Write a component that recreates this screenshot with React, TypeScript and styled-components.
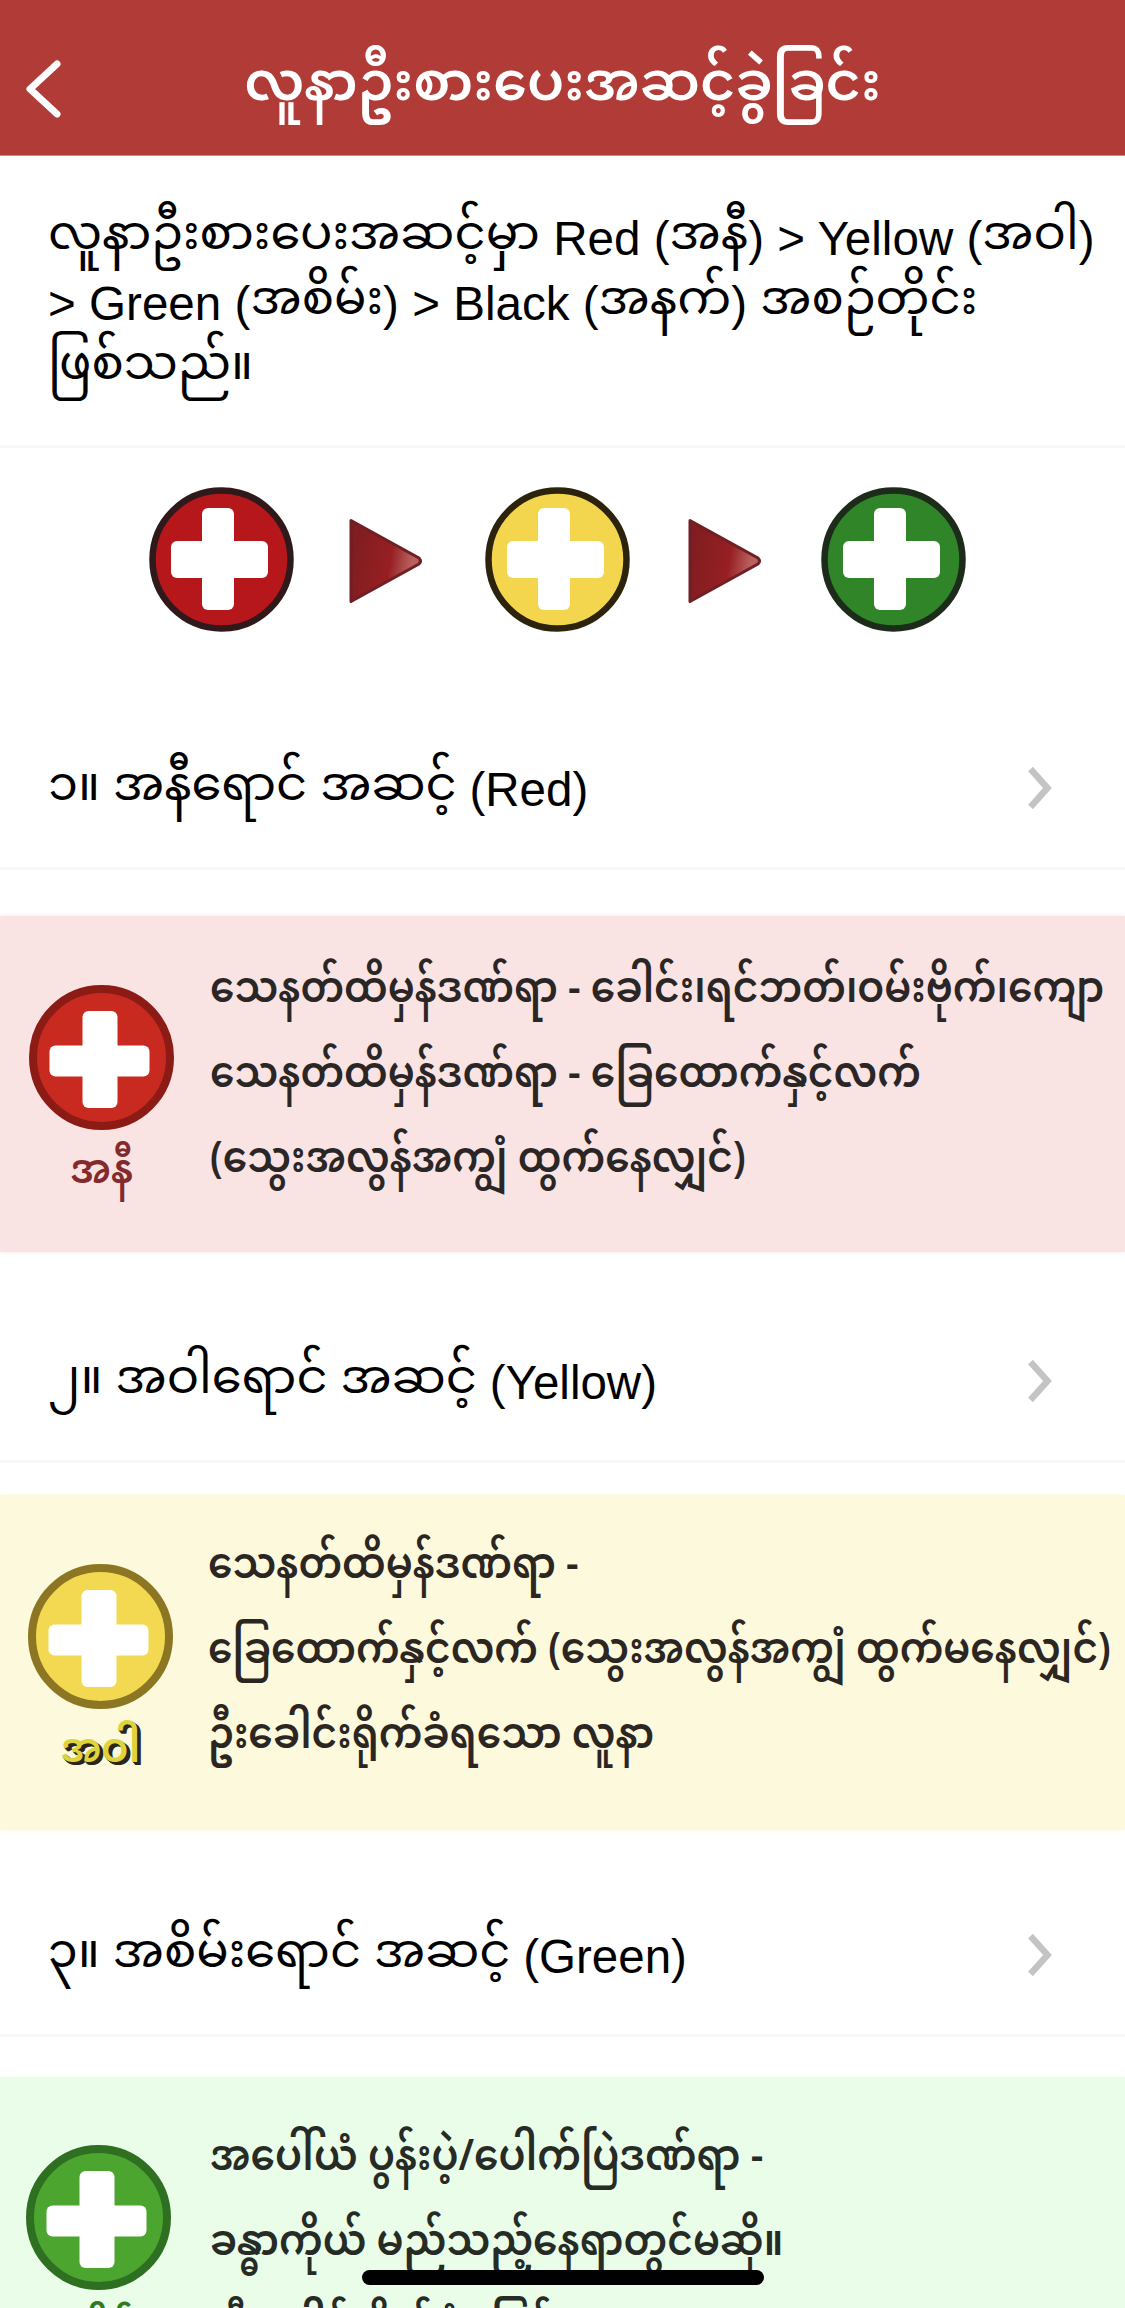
import React from "react";
import styled, { createGlobalStyle } from "styled-components";

const GlobalStyle = createGlobalStyle`
  * { box-sizing: border-box; }
  body { margin: 0; background: #fff; overflow: hidden; }
`;

const Screen = styled.main`
  position: relative;
  width: 1125px;
  height: 2308px;
  overflow: hidden;
  background: #fff;
  color: #000;
  font-family: "Liberation Sans", "Noto Sans Myanmar", sans-serif;
`;

const Header = styled.header`
  display: grid;
  grid-template-columns: 125px 1fr 125px;
  height: 156px;
  background: #b13c37;
  border-bottom: 1px solid #d08a82;
`;

const BackButton = styled.button`
  display: flex;
  padding: 60px 0 0 26px;
  border: 0;
  background: none;
`;

const Title = styled.h1`
  margin: 0;
  padding-top: 53px;
  color: #fff;
  font-family: "Noto Sans Myanmar", sans-serif;
  font-size: 53.9px;
  font-weight: 600;
  line-height: 70px;
  text-align: center;
  white-space: nowrap;
`;

const Intro = styled.section`
  height: 292px;
  padding: 50px 0 0 48px;
  border-bottom: 3px solid #f7f7f7;
`;

const IntroLine = styled.p`
  margin: 0;
  font-size: 47.6px;
  line-height: 65px;
  white-space: nowrap;
`;

const Burmese = styled.span`
  font-family: "Noto Sans Myanmar", sans-serif;
  font-size: 48px;
  line-height: 0;
  vertical-align: 6px;
`;

const Flow = styled.section`
  display: flex;
  align-items: center;
  height: 240px;
  padding: 0 0 17px 149px;
`;

const ArrowSlot = styled.div<{ $left: number; $right: number }>`
  display: flex;
  margin: 2px ${(p) => p.$right}px 0 ${(p) => p.$left}px;
`;

const LevelRow = styled.section<{ $height: number }>`
  display: flex;
  justify-content: space-between;
  align-items: flex-end;
  height: ${(p) => p.$height}px;
  padding: 0 73px 45px 48px;
  border-bottom: 3px solid #f7f7f7;
`;

const LevelTitle = styled.h2`
  margin: 0;
  font-size: 47.5px;
  font-weight: 400;
  line-height: 65px;
  word-spacing: -0.4px;
  white-space: nowrap;
`;

const ChevronSlot = styled.div`
  display: flex;
  padding-bottom: 13px;
`;

const Panel = styled.section<{ $bg: string; $gap: number; $height: number }>`
  display: flex;
  height: ${(p) => p.$height}px;
  margin-top: ${(p) => p.$gap}px;
  background: ${(p) => p.$bg};
  box-shadow: 0 0 5px ${(p) => p.$bg};
`;

const Badge = styled.div<{ $left: number; $top: number }>`
  display: flex;
  flex-direction: column;
  align-items: center;
  flex: none;
  width: 145px;
  margin-left: ${(p) => p.$left}px;
  padding-top: ${(p) => p.$top}px;
`;

const BadgeLabel = styled.span<{ $color: string; $shadow?: boolean }>`
  margin-top: 12px;
  color: ${(p) => p.$color};
  font-family: "Noto Sans Myanmar", sans-serif;
  font-size: 41px;
  font-weight: 600;
  line-height: 64px;
  white-space: nowrap;
  transform: scaleX(0.96);
  text-shadow: ${(p) => (p.$shadow ? "1px 1px 0 #2b2618, 2px 2px 0 #2b2618, 3px 3px 0 #2b2618, 4px 3px 0 #2b2618" : "none")};
`;

const Lines = styled.div<{ $color: string; $top: number; $left: number }>`
  padding: ${(p) => p.$top}px 0 0 ${(p) => p.$left}px;
  color: ${(p) => p.$color};
  font-family: "Noto Sans Myanmar", sans-serif;
  font-size: 42.5px;
  font-weight: 600;
  line-height: 85px;
  white-space: nowrap;
`;

const Line = styled.p`
  width: max-content;
  margin: 0;
  transform: scaleX(0.921);
  transform-origin: left center;
`;

const HomeBar = styled.div`
  position: absolute;
  left: 362px;
  top: 2270px;
  width: 402px;
  height: 15px;
  border-radius: 8px;
  background: #000;
`;

function MixedText({ text }: { text: string }) {
  const runs = text.split(/([\u1000-\u109f]+)/).filter(Boolean);
  return (
    <>
      {runs.map((run, i) =>
        /[\u1000-\u109f]/.test(run) ? <Burmese key={i}>{run}</Burmese> : <React.Fragment key={i}>{run}</React.Fragment>
      )}
    </>
  );
}

const CrossSvg = styled.svg`
  flex: none;
  width: 145px;
  height: 145px;
`;

function Cross({ fill, ring, thin }: { fill: string; ring: string; thin?: boolean }) {
  return (
    <CrossSvg viewBox="0 0 145 145">
      <circle cx="72.5" cy="72.5" r={thin ? 69 : 68.5} fill={fill} stroke={ring} strokeWidth={thin ? 6.5 : 8} />
      <g fill="#fff">
        <rect x={thin ? 53 : 53.5} y={thin ? 21 : 26} width={thin ? 32 : 35} height={thin ? 102 : 97} rx="6" />
        <rect x={thin ? 22 : 20.5} y={thin ? 54 : 60.5} width={thin ? 97 : 100} height={thin ? 37 : 31} rx="6" />
      </g>
    </CrossSvg>
  );
}

function Arrow() {
  return (
    <svg width="74" height="86" viewBox="0 0 74 86">
      <defs>
        <linearGradient id="arrow" x1="0" x2="1" y1="0.2" y2="0.4">
          <stop offset="0" stopColor="#7d1d20" />
          <stop offset="0.6" stopColor="#971f22" />
          <stop offset="0.9" stopColor="#b86160" />
        </linearGradient>
      </defs>
      <path d="M2 2.5 L70 40 Q73 43 70 46 L2 83.5 Z" fill="url(#arrow)" stroke="#701f24" strokeWidth="3" strokeLinejoin="round" />
    </svg>
  );
}

function Chevron() {
  return (
    <ChevronSlot>
      <svg width="24" height="42" viewBox="0 0 24 42" fill="none">
        <path d="M2.5 2 L19.5 21 L2.5 40" stroke="#c4c4c5" strokeWidth="6.5" />
      </svg>
    </ChevronSlot>
  );
}

type Level = {
  title: string;
  row: number;
  bg: string;
  gap: number;
  height: number;
  top: number;
  indent: number;
  left: number;
  badgeTop: number;
  fill: string;
  ring: string;
  label: string;
  labelColor: string;
  shadow?: boolean;
  ink: string;
  lines: string[];
};

const levels: Level[] = [
  {
    title: "၁။ အနီရောင် အဆင့် (Red)",
    row: 182, bg: "#f9e3e3", gap: 46, height: 336, top: 34, indent: 36, left: 29, badgeTop: 69,
    fill: "#c92a1f", ring: "#8c1a15", label: "အနီ", labelColor: "#84292c", ink: "#2b2626",
    lines: [
      "သေနတ်ထိမှန်ဒဏ်ရာ - ခေါင်း၊ရင်ဘတ်၊ဝမ်းဗိုက်၊ကျော",
      "သေနတ်ထိမှန်ဒဏ်ရာ - ခြေထောက်နှင့်လက်",
      "(သွေးအလွန်အကျွံ ထွက်နေလျှင်)",
    ],
  },
  {
    title: "၂။ အဝါရောင် အဆင့် (Yellow)",
    row: 211, bg: "#fdf9dc", gap: 32, height: 335, top: 31, indent: 35, left: 28, badgeTop: 69,
    fill: "#f2d951", ring: "#8c7624", label: "အဝါ", labelColor: "#dfd33c", shadow: true, ink: "#2b2622",
    lines: [
      "သေနတ်ထိမှန်ဒဏ်ရာ -",
      "ခြေထောက်နှင့်လက် (သွေးအလွန်အကျွံ ထွက်မနေလျှင်)",
      "ဦးခေါင်းရိုက်ခံရသော လူနာ",
    ],
  },
  {
    title: "၃။ အစိမ်းရောင် အဆင့် (Green)",
    row: 207, bg: "#e9fde8", gap: 40, height: 336, top: 41, indent: 39, left: 26, badgeTop: 68,
    fill: "#4ba52f", ring: "#2f6f22", label: "အစိမ်း", labelColor: "#2f7a24", ink: "#262b26",
    lines: [
      "အပေါ်ယံ ပွန်းပဲ့/ပေါက်ပြဲဒဏ်ရာ -",
      "ခန္ဓာကိုယ် မည်သည့်နေရာတွင်မဆို။",
      "(ဦးခေါင်းရိုက်ခံရခြင်း)",
    ],
  },
];

export default function App() {
  return (
    <Screen>
      <GlobalStyle />
      <Header>
        <BackButton aria-label="Back">
          <svg width="36" height="58" viewBox="0 0 36 58" fill="none">
            <path d="M31 4 L4 29 L31 54" stroke="#fff" strokeWidth="7" strokeLinecap="round" strokeLinejoin="round" />
          </svg>
        </BackButton>
        <Title>လူနာဦးစားပေးအဆင့်ခွဲခြင်း</Title>
      </Header>
      <Intro>
        <IntroLine><MixedText text="လူနာဦးစားပေးအဆင့်မှာ Red (အနီ) > Yellow (အဝါ)" /></IntroLine>
        <IntroLine><MixedText text="> Green (အစိမ်း) > Black (အနက်) အစဉ်တိုင်း" /></IntroLine>
        <IntroLine><MixedText text="ဖြစ်သည်။" /></IntroLine>
      </Intro>
      <Flow>
        <Cross thin fill="#b5171b" ring="#30191a" />
        <ArrowSlot $left={55} $right={62}><Arrow /></ArrowSlot>
        <Cross thin fill="#f3d64e" ring="#2b230c" />
        <ArrowSlot $left={58} $right={59}><Arrow /></ArrowSlot>
        <Cross thin fill="#2f8527" ring="#1c2b1a" />
      </Flow>
      {levels.map((level) => (
        <React.Fragment key={level.title}>
          <LevelRow $height={level.row}>
            <LevelTitle><MixedText text={level.title} /></LevelTitle>
            <Chevron />
          </LevelRow>
          <Panel $bg={level.bg} $gap={level.gap} $height={level.height}>
            <Badge $left={level.left} $top={level.badgeTop}>
              <Cross fill={level.fill} ring={level.ring} />
              <BadgeLabel $color={level.labelColor} $shadow={level.shadow}>{level.label}</BadgeLabel>
            </Badge>
            <Lines $color={level.ink} $top={level.top} $left={level.indent}>
              {level.lines.map((line) => <Line key={line}>{line}</Line>)}
            </Lines>
          </Panel>
        </React.Fragment>
      ))}
      <HomeBar />
    </Screen>
  );
}
